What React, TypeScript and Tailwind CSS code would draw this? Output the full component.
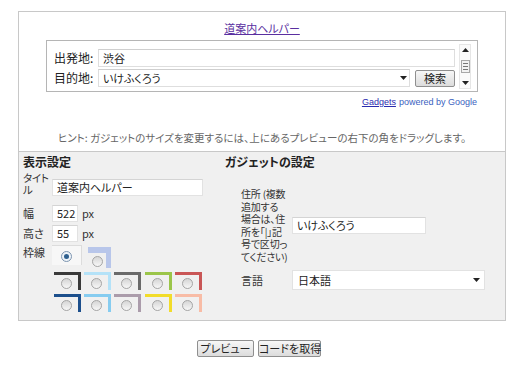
import React from "react";

const jp = "font-['Noto_Sans_CJK_JP','Noto_Sans',sans-serif] [font-feature-settings:'palt']";

const Arrow = ({ up = false }: { up?: boolean }) => (
  <svg width="7" height="4" viewBox="0 0 7 4" className={up ? "rotate-180" : ""}>
    <path d="M0 0h7L3.5 4z" fill="#222" />
  </svg>
);

const Radio = ({ checked = false }: { checked?: boolean }) => (
  <span
    className={
      "flex h-[11px] w-[11px] items-center justify-center rounded-full border " +
      (checked ? "border-[#7d95b0] bg-[#eef3f8]" : "border-[#a5a5a5] bg-[linear-gradient(#d6d6d6,#f7f7f7)]")
    }
  >
    {checked && <span className="h-[5px] w-[5px] rounded-full bg-[#2e5f8e]" />}
  </span>
);

const frames = [
  "border-[#3a3a3a]",
  "border-[#b4e2f8]",
  "border-[#6a6a6a]",
  "border-[#9bc54a]",
  "border-[#c95656]",
  "border-[#1c4f8c]",
  "border-[#86ccf0]",
  "border-[#ab9cab]",
  "border-[#f2dc2a]",
  "border-[#f8bca6]",
];

const Field = ({ value, w }: { value: string; w: string }) => (
  <div className={`${w} flex h-[17px] items-center border border-[#e2e2e2] border-t-[#d4d4d4] bg-white px-[4px] text-[11px] text-[#222]`}>
    {value}
  </div>
);

const addressLines = ["住所 (複数", "追加する", "場合は、住", "所を「|」記", "号で区切っ", "てください)"];

export default function App() {
  return (
    <div className={`h-[366px] w-[522px] bg-white pl-[18px] pt-[11px] ${jp}`}>
      <div className="w-[488px] border border-[#c8c8c8]">
        {/* preview */}
        <div className="h-[140px] border-b border-[#c8c8c8]">
          <div className="flex h-[28px] justify-center pt-[10px]">
            <a href="#" className="text-[11px] leading-[13px] text-[#5a2fa0] underline">
              道案内ヘルパー
            </a>
          </div>
          <div className="ml-[27px] flex h-[52px] w-[432px] border border-[#b5b5b5] bg-white">
            <div className="pl-[7px] pt-[8px]">
              <div className="flex h-[18px] items-center">
                <span className="w-[44px] text-[12px] text-[#222]">出発地:</span>
                <div className="flex h-[18px] w-[357px] items-center border border-[#dedede] border-t-[#cfcfcf] px-[4px] text-[11px] text-[#222]">
                  渋谷
                </div>
              </div>
              <div className="mt-[2px] flex h-[18px] items-center">
                <span className="w-[44px] text-[12px] text-[#222]">目的地:</span>
                <div className="flex h-[18px] w-[312px] items-center justify-between border border-[#dedede] border-t-[#cfcfcf] pl-[4px] pr-[2px] text-[11px] text-[#222]">
                  <span>いけふくろう</span>
                  <Arrow />
                </div>
                <button className="ml-[5px] flex h-[17px] w-[40px] items-center justify-center rounded-[2px] border border-[#8f8f8f] bg-[linear-gradient(#f7f7f7,#dcdcdc)] text-[11px] text-[#222]">
                  検索
                </button>
              </div>
            </div>
            <div className="ml-[4px] mt-[3px] flex h-[45px] w-[12px] flex-col items-center justify-between border border-[#e6e6e6] bg-[#fafafa] py-[3px]">
              <Arrow up />
              <div className="flex h-[13px] w-[9px] flex-col justify-center gap-[2px] border border-[#a8a8a8] bg-[#f2f2f2] px-[1px]">
                <span className="h-px bg-[#777]" />
                <span className="h-px bg-[#777]" />
                <span className="h-px bg-[#777]" />
              </div>
              <Arrow />
            </div>
          </div>
          <div className="mt-[4px] flex justify-end pr-[28px] font-['Liberation_Sans',Arial,sans-serif] text-[9px] leading-[12px] text-[#3b5fc0]">
            <a href="#" className="text-[#2b2bb0] underline">Gadgets</a>
            <span className="ml-[3px]">powered by Google</span>
          </div>
          <p className="mt-[23px] whitespace-nowrap text-center text-[10.5px] leading-[14px] text-[#666]">
            ヒント: ガジェットのサイズを変更するには、上にあるプレビューの右下の角をドラッグします。
          </p>
        </div>

        {/* settings */}
        <div className="flex h-[168px] bg-[#f0f0f0] text-[#333]">
          <div className="w-[205px] pl-[4px] pt-[3px]">
            <h3 className="text-[12px] font-bold leading-[14px] text-[#222]">表示設定</h3>
            <div className="mt-[3px] flex items-end">
              <div className="w-[29px] whitespace-nowrap text-[10.5px] leading-[12px] tracking-[-0.3px]">
                <div>タイト</div>
                <div>ル</div>
              </div>
              <Field value="道案内ヘルパー" w="w-[151px]" />
            </div>
            <div className="mt-[9px] flex items-center">
              <span className="w-[29px] text-[11px]">幅</span>
              <Field value="522" w="w-[26px]" />
              <span className="ml-[4px] text-[11px]">px</span>
            </div>
            <div className="mt-[3px] flex items-center">
              <span className="w-[29px] text-[11px]">高さ</span>
              <Field value="55" w="w-[26px]" />
              <span className="ml-[4px] text-[11px]">px</span>
            </div>
            <div className="mt-[3px] flex">
              <span className="w-[29px] pt-[1px] text-[11px] leading-[13px]">枠線</span>
              <div>
                <div className="flex items-start gap-[6px]">
                  <div className="flex h-[20px] w-[30px] items-center justify-center border-r border-t border-[#dcdcdc] bg-[#f7f7f7] pt-[2px]">
                    <Radio checked />
                  </div>
                  <div className="mt-[2px] flex h-[21px] w-[23px] items-end border-r-[5px] border-t-[6px] border-[#b8c6ea] pb-[1px] pl-[4px]">
                    <Radio />
                  </div>
                </div>
                <div className="ml-[2px] mt-[4px] grid w-[148px] grid-cols-5 gap-x-[3px] gap-y-[4px]">
                  {frames.map((c, i) => (
                    <div key={i} className={`flex h-[18px] w-[27px] items-end border-r-[3px] border-t-[3px] ${c} pb-[1px] pl-[7px]`}>
                      <Radio />
                    </div>
                  ))}
                </div>
              </div>
            </div>
          </div>

          <div className="flex-1 pl-[1px] pt-[3px]">
            <h3 className="text-[12px] font-bold leading-[14px] text-[#222]">ガジェットの設定</h3>
            <div className="mt-[19px] flex items-center pl-[16px]">
              <div className="w-[51px] whitespace-nowrap text-[10px] leading-[12.5px] tracking-[-0.2px]">
                {addressLines.map((l) => (
                  <div key={l}>{l}</div>
                ))}
              </div>
              <Field value="いけふくろう" w="w-[134px]" />
            </div>
            <div className="mt-[7px] flex items-center pl-[16px]">
              <span className="w-[51px] text-[11px]">言語</span>
              <div className="flex h-[20px] w-[193px] items-center justify-between border border-[#e2e2e2] bg-white pl-[5px] pr-[4px] text-[11px] text-[#222]">
                <span>日本語</span>
                <Arrow />
              </div>
            </div>
          </div>
        </div>
      </div>

      <div className="mt-[19px] flex w-[488px] justify-center gap-[4px] pr-[6px]">
        <button className="h-[17px] w-[57px] whitespace-nowrap rounded-[2px] border border-[#8f8f8f] bg-[linear-gradient(#f7f7f7,#dcdcdc)] text-[11px] leading-[15px] text-[#222]">
          プレビュー
        </button>
        <button className="h-[17px] w-[63px] whitespace-nowrap rounded-[2px] border border-[#8f8f8f] bg-[linear-gradient(#f7f7f7,#dcdcdc)] text-[11px] leading-[15px] text-[#222]">
          コードを取得
        </button>
      </div>
    </div>
  );
}
